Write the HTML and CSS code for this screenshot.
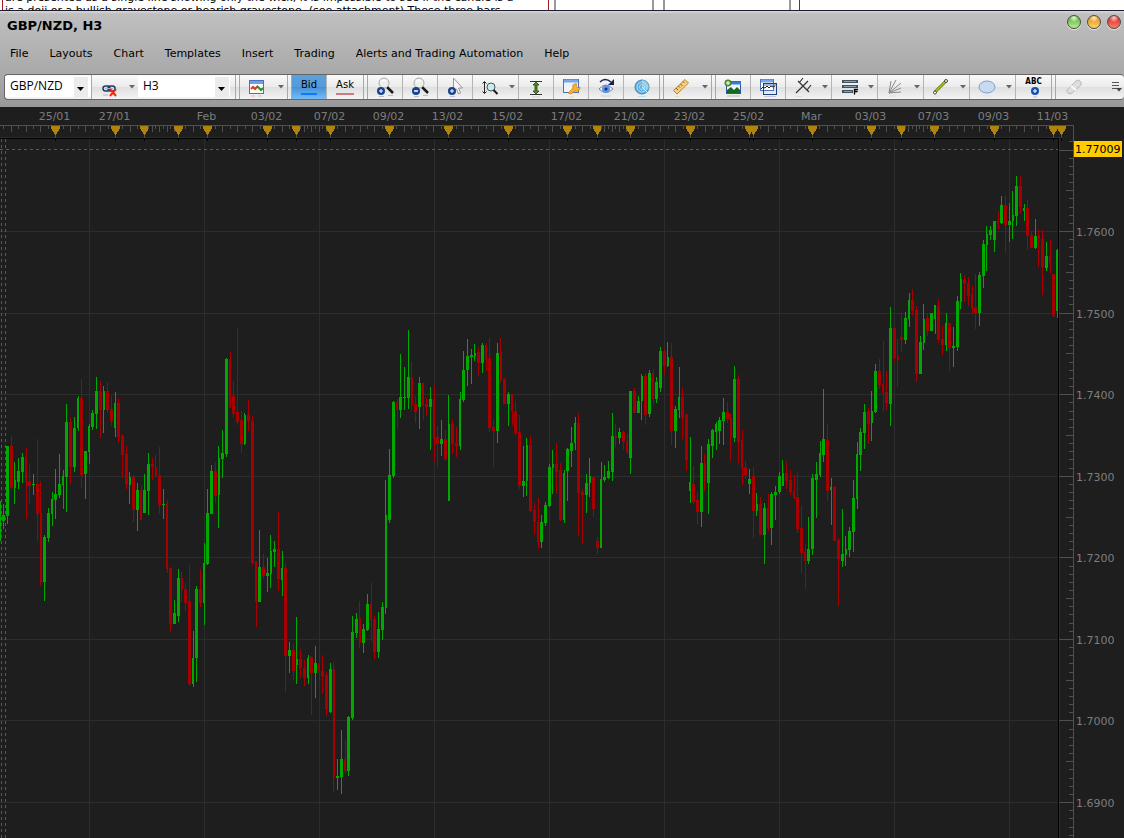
FILE: index.html
```html
<!DOCTYPE html>
<html lang="en">
<head>
  <meta charset="UTF-8">
  <meta name="viewport" content="width=device-width, initial-scale=1.0">
  <title>GBP/NZD, H3</title>
  <link rel="stylesheet" href="styles.css">
</head>
<body>
  <div class="backdrop">
    <div class="note"><p>are presented as a single line showing only the wick, it is impossible to see if the candle is a<br>is a doji or a bullish gravestone or bearish gravestone. (see attachment) These three bars</p></div>
    <div class="cell cell-a"></div>
    <div class="cell cell-b"></div>
    <div class="cell cell-c"></div>
    <div class="cell cell-d"></div>
  </div>

  <header class="window-head">
    <div class="title-bar">
      <h1>GBP/NZD, H3</h1>
      <div class="window-buttons">
        <button class="orb green" aria-label="Minimize"></button>
        <button class="orb amber" aria-label="Maximize"></button>
        <button class="orb red" aria-label="Close"></button>
      </div>
    </div>

    <nav class="menu">
      <a href="#">File</a>
      <a href="#">Layouts</a>
      <a href="#">Chart</a>
      <a href="#">Templates</a>
      <a href="#">Insert</a>
      <a href="#">Trading</a>
      <a href="#">Alerts and Trading Automation</a>
      <a href="#">Help</a>
    </nav>

    <div class="toolbar">
      <div class="group">
        <div class="combo pair">
          <select aria-label="Instrument"><option>GBP/NZD</option></select>
          <svg class="combo-arrow" width="14" height="20"><path d="M3 10h7l-3.500 4z"/></svg>
        </div>
        <button class="tool drop plain" aria-label="Link chart">
          <svg width="20" height="22"><g fill="none" stroke="#1d3c66" stroke-width="1.5"><rect x="4" y="10" width="7" height="5" rx="2.5"/><rect x="9" y="10" width="7" height="5" rx="2.5"/></g><path d="M6 12.5h8" stroke="#9db7d8"/><path d="M11 13l6 7M17 13l-6 7" stroke="#f02a10" stroke-width="2"/><path d="M4 19h5" stroke="#bbb"/></svg>
          <svg class="caret" width="6" height="4"><path d="M0 0h6l-3 3.5z"/></svg>
        </button>
        <div class="combo period">
          <select aria-label="Period"><option>H3</option></select>
          <svg class="combo-arrow" width="14" height="20"><path d="M3 10h7l-3.5 4z"/></svg>
        </div>
      </div>

      <div class="group">
        <button class="tool drop wide" aria-label="Chart type">
          <svg width="20" height="22"><rect x="2.5" y="4.500" width="14" height="13" fill="#fff" stroke="#4b70b5"/><path d="M3 6.5h13" stroke="#6f9be8" stroke-width="3"/><path d="M4 13l2-2 2 2 3-3" fill="none" stroke="#e03a1a" stroke-width="2"/><path d="M10 10l4 4 2-2" fill="none" stroke="#2d8a2d" stroke-width="2"/><path d="M4 20h4" stroke="#efb4a8"/><path d="M11 20h4" stroke="#b5d7b5"/></svg>
          <svg class="caret" width="6" height="4"><path d="M0 0h6l-3 3.5z"/></svg>
        </button>
      </div>

      <div class="group">
        <button class="tool side bid"><span>Bid</span></button>
        <button class="tool side ask"><span>Ask</span></button>
      </div>

      <div class="group">
        <button class="tool" aria-label="Zoom in">
          <svg width="20" height="22"><use href="#lens"/><path d="M4 15h4M6 13v4" stroke="#fff"/></svg>
        </button>
        <button class="tool" aria-label="Zoom out">
          <svg width="20" height="22"><use href="#lens"/><path d="M4 15h4" stroke="#fff" stroke-width="1.5"/></svg>
        </button>
        <button class="tool" aria-label="Pointer zoom">
          <svg width="20" height="22"><path d="M8.500 2v13l3-2 2 5 2-1-2-5h4z" fill="#f6f6f6" stroke="#999"/><circle cx="7" cy="15" r="4" fill="#174391"/><path d="M5 15h4M7 13v4" stroke="#fff"/><path d="M5 20.500h5" stroke="#b9c5dd"/></svg>
        </button>
        <button class="tool drop" aria-label="Vertical zoom">
          <svg width="20" height="22"><path d="M4.500 6v11M2.500 7.500l2-2 2 2M2.500 15.500l2 2 2-2" fill="none" stroke="#222"/><circle cx="11" cy="11" r="4" fill="#c4edf5" stroke="#555"/><path d="M13.500 14l4 4" stroke="#1b1b1b" stroke-width="2"/></svg>
          <svg class="caret" width="6" height="4"><path d="M0 0h6l-3 3.5z"/></svg>
        </button>
        <button class="tool" aria-label="Fit height">
          <svg width="20" height="22"><path d="M4 5.500h12M4 18.500h12" stroke="#333"/><path d="M10 6l3 3h-2v6h2l-3 3-3-3h2V9H7z" fill="#49911f" stroke="#25420e" stroke-width=".8"/><path d="M6 21h8" stroke="#cfcfcf"/></svg>
        </button>
        <button class="tool" aria-label="Chart settings">
          <svg width="20" height="22"><rect x="2.500" y="3.500" width="15" height="13" fill="#edf3fc" stroke="#4d73b8"/><path d="M3 5h14" stroke="#7ba6ec" stroke-width="3"/><path d="M7 17l5-5c-1-3 1-5 4-4l-1 2 2 2 2-1c0 3-2 5-5 4l-4 3z" fill="#f9b030" stroke="#c97a12" stroke-width=".7"/><path d="M8 21h5" stroke="#f3d7a0"/></svg>
        </button>
        <button class="tool" aria-label="Show hidden">
          <svg width="20" height="22"><path d="M3 13q7-8 14 0-7 7-14 0z" fill="#f4f8ff" stroke="#77839a"/><circle cx="10" cy="13" r="4" fill="#5f95ec"/><circle cx="10" cy="13" r="1.500" fill="#16306f"/><path d="M4 6q5-5 11 0" fill="none" stroke="#182253" stroke-width="1.500"/><path d="M18 3v6h-6z" fill="#182253"/><path d="M5 20h10" stroke="#c9cfe0"/></svg>
        </button>
        <button class="tool" aria-label="Radar">
          <svg width="20" height="22"><circle cx="10" cy="11" r="7" fill="#5eafdd" stroke="#3f86b3"/><path d="M10 11V4a7 7 0 0 1 6 10z" fill="#8cc9ea"/><g fill="none" stroke="#c6e4f5" stroke-width=".8"><circle cx="10" cy="11" r="5"/><circle cx="10" cy="11" r="2.500"/></g><path d="M10 11l5 5" stroke="#e9f6fd"/><path d="M6 20.500h8" stroke="#c5dcea"/></svg>
        </button>
      </div>

      <div class="group">
        <button class="tool drop wide" aria-label="Measure">
          <svg width="20" height="22"><path d="M2.500 14.500L14 3.500l3.500 3.500L6 18z" fill="#f7ce7a" stroke="#b8873a"/><path d="M5 12l2 2M7.500 10l1.500 1.500M9.500 8l2 2M12 5.500l1.500 1.500" stroke="#8a5c1c"/><path d="M4 20.500h4" stroke="#ecdcbc"/></svg>
          <svg class="caret" width="6" height="4"><path d="M0 0h6l-3 3.5z"/></svg>
        </button>
      </div>

      <div class="group">
        <button class="tool" aria-label="Add picture">
          <svg width="20" height="22"><rect x="3.500" y="5.500" width="14" height="12" fill="#eef5ff" stroke="#2c57a0"/><path d="M3 7h15" stroke="#3e78d6" stroke-width="3"/><path d="M4 17v-3l4-3 3 3 3-3 3 3v3z" fill="#146a1c"/><circle cx="5" cy="7" r="3.200" fill="#5d9b38" stroke="#345f1b" stroke-width=".6"/><path d="M3 7h4M5 5v4" stroke="#fff"/><path d="M4 20h13" stroke="#a9c8ac"/></svg>
        </button>
        <button class="tool" aria-label="Add indicator">
          <svg width="20" height="22"><rect x="2.500" y="3.500" width="13" height="11" fill="#fff" stroke="#4d73b8"/><path d="M3 5h12" stroke="#7ba6ec" stroke-width="3"/><rect x="5.500" y="7.500" width="13" height="11" fill="none" stroke="#1d3f86"/><path d="M6 9h12" stroke="#4d73b8"/><path d="M3 13l2-2 2 1 2-2 2 2 2-2 2 1 2-1" fill="none" stroke="#222"/><path d="M6 20.500h12" stroke="#c3ccde"/></svg>
        </button>
        <button class="tool drop fork" aria-label="Pitchfork">
          <svg width="20" height="22"><path d="M5 5l11 11M6 7l4-5M3 17L15 5M14 14l4-5" fill="none" stroke="#333" stroke-width="1.200"/><path d="M3 20.500h6" stroke="#ddd"/></svg>
          <svg class="caret" width="6" height="4"><path d="M0 0h6l-3 3.5z"/></svg>
        </button>
        <button class="tool drop" aria-label="Fibonacci">
          <svg width="20" height="22"><path d="M3 5.500h16M3 10.500h16M3 15.500h11" stroke="#41525f" stroke-width="3"/><path d="M5 5.500h12M5 10.500h12M5 15.500h8" stroke="#8fa0ab"/><path d="M15.500 18.500v-5h3.500M15.500 15.500h3" fill="none" stroke="#000" stroke-width="1.300"/></svg>
          <svg class="caret" width="6" height="4"><path d="M0 0h6l-3 3.5z"/></svg>
        </button>
        <button class="tool drop" aria-label="Fan">
          <svg width="20" height="22"><path d="M4 17L6 5M4 17L11 4M4 17L16 7M4 17l12-5M4 17l12-1" stroke="#888"/><path d="M4 20h7" stroke="#ddd"/></svg>
          <svg class="caret" width="6" height="4"><path d="M0 0h6l-3 3.5z"/></svg>
        </button>
        <button class="tool drop" aria-label="Line">
          <svg width="20" height="22"><path d="M4 16L15 5" stroke="#5b7010" stroke-width="3"/><path d="M4 16L15 5" stroke="#a8cf1c" stroke-width="1.400"/><g fill="#fff" stroke="#444"><circle cx="4" cy="16.500" r="1.500"/><circle cx="15" cy="5" r="1.500"/></g><path d="M3 20h6" stroke="#dde2cc"/></svg>
          <svg class="caret" width="6" height="4"><path d="M0 0h6l-3 3.5z"/></svg>
        </button>
        <button class="tool drop" aria-label="Ellipse">
          <svg width="20" height="22"><ellipse cx="10" cy="11" rx="8" ry="6" fill="#c6dbf1" stroke="#7ea0c6"/><path d="M5 20h9" stroke="#dbe3ec"/></svg>
          <svg class="caret" width="6" height="4"><path d="M0 0h6l-3 3.5z"/></svg>
        </button>
        <button class="tool label" aria-label="Add text">
          <span>ABC</span>
          <svg width="16" height="12"><circle cx="9" cy="5" r="4" fill="#174fae"/><path d="M7 5h4M9 3v4" stroke="#fff"/><path d="M7 11h4" stroke="#b5c5e2"/></svg>
        </button>
      </div>

      <div class="group last">
        <button class="tool plain" aria-label="Erase">
          <svg width="20" height="22"><path d="M3 14L12 5q2-2 4 0t1 4l-9 8q-2 2-4 0t-1-3z" fill="#dedede" stroke="#b9b9b9"/><path d="M7 10l5 4" stroke="#fafafa" stroke-width="2"/></svg>
        </button>
        <button class="overflow" aria-label="More tools">
          <svg width="10" height="12"><path d="M0 1.500h7M0 4.500h7M0 7.500h5" stroke="#555"/><path d="M4 7h6l-3 3.500z" fill="#444"/></svg>
        </button>
      </div>
    </div>
  </header>

  <main>
    <svg id="chart" class="chart" viewBox="0 107 1124 731" role="img" aria-label="GBP/NZD three hour candles"></svg>
  </main>

  <svg class="defs" width="0" height="0">
    <defs>
      <g id="lens">
        <path d="M12 11l6 6" stroke="#1a1a1a" stroke-width="2.500"/>
        <circle cx="9" cy="7" r="5" fill="#eee" stroke="#aaa"/>
        <path d="M6 6q2-3 5-1" fill="none" stroke="#fff" stroke-width="1.500"/>
        <circle cx="6" cy="15" r="4" fill="#174391"/>
        <path d="M4 20.500h5M13 19.500h5" stroke="#b6bfd0"/>
      </g>
    </defs>
  </svg>

  <script src="chart.js"></script>
</body>
</html>
```
FILE: styles.css
```css
* {
  box-sizing: border-box;
}
body {
  margin: 0;
  min-height: 100vh;
  background: #1e1e1e;
  font-family: "DejaVu Sans", Verdana, sans-serif;
  font-size: 11px;
  color: #000;
}
button {
  margin: 0;
  padding: 0;
  border: none;
  background: none;
  font-family: inherit;
  cursor: pointer;
}

/* document behind the chart window */
.backdrop {
  display: flex;
  height: 10px;
  overflow: hidden;
  background: #fff;
}
.note {
  width: 547px;
  margin-left: 2px;
  border-left: 1px solid #a01c24;
  border-right: 1px solid #a01c24;
}
.note p {
  margin: -9px 0 0 2px;
  line-height: 13px;
  white-space: nowrap;
}
.cell {
  border-right: 2px solid #999;
}
.cell-a {
  width: 7px;
}
.cell-b {
  width: 98px;
}
.cell-c {
  width: 11px;
}
.cell-d {
  width: 135px;
  border-right: 1px solid #a01c24;
  box-shadow: inset -8px 0 #fff, inset -10px 0 #999;
}

.window-head {
  height: 97px;
  border-top: 1px solid #1c1c30;
  background: linear-gradient(#d8d8d8, #bfbfbf 3px, #a6a6a6 70px, #999);
}
.title-bar {
  display: flex;
  justify-content: space-between;
  height: 29px;
  padding: 4px 3px 0 7px;
}
h1 {
  margin: 0;
  font-size: 13px;
  line-height: 22px;
}
.window-buttons {
  display: flex;
  gap: 6px;
}
.orb {
  width: 14px;
  height: 14px;
  border: 1px solid #4b4b3c;
  border-radius: 50%;
  box-shadow: 0 1px 1px #e6e6e6;
}
.green {
  background: radial-gradient(circle at 50% 15%, #e2ffd4, transparent 40%), linear-gradient(#57a040, #b2f48a);
}
.amber {
  background: radial-gradient(circle at 50% 15%, #fff0c0, transparent 40%), linear-gradient(#d8871c, #ffd660);
}
.red {
  background: radial-gradient(circle at 50% 15%, #ffd0d0, transparent 40%), linear-gradient(#c82a2a, #ff7a68);
}
.menu {
  display: flex;
  gap: 21px;
  height: 34px;
  padding-left: 10px;
}
.menu a {
  color: #000;
  line-height: 28px;
  text-decoration: none;
}

.toolbar {
  display: flex;
  gap: 3px;
  height: 26px;
  margin-left: 4px;
  border: 1px solid #666;
  border-right: none;
  border-radius: 4px;
  background: linear-gradient(#fafafa, #ebebeb 50%, #dfdfdf 51%, #f3f3f3);
}
.group {
  display: flex;
  flex: none;
  border-right: 1px solid #a8a8a8;
}
.group + .group {
  border-left: 1px solid #a8a8a8;
}
.last {
  flex: 1;
  justify-content: space-between;
  border-right: none;
}
.combo {
  position: relative;
  padding: 1px 0;
}
.combo select {
  width: 100%;
  height: 21px;
  padding: 0 0 3px 5px;
  border: none;
  background: #fff;
  appearance: none;
  font-family: "Open Sans", "Noto Sans", sans-serif;
  font-size: 12px;
}
.pair {
  width: 87px;
  border-right: 1px solid #a8a8a8;
}
.period {
  width: 97px;
  padding-right: 5px;
}
.combo-arrow {
  position: absolute;
  top: 2px;
  right: 3px;
  background: #ececec;
  pointer-events: none;
}
.period .combo-arrow {
  right: 6px;
}
.tool {
  display: flex;
  align-items: center;
  justify-content: center;
  width: 35px;
  border-right: 1px solid #b4b4b4;
}
.drop {
  justify-content: space-between;
  width: 46px;
  padding: 0 3px 0 7px;
}
.wide {
  width: 47px;
}
.plain,
.tool:last-child {
  border-right: none;
}
.caret {
  fill: #666;
}
.side {
  font-size: 10px;
}
.side span {
  padding: 0 0 3px;
  border-bottom: 2px solid #c87c86;
  line-height: 11px;
}
.side.bid {
  background: linear-gradient(#5b9fdb, #5599d8 50%, #4690d8 51%, #74bdf8);
}
.side.ask {
  width: 36px;
}
.bid span {
  border-color: #087aff;
}
.label {
  flex-direction: column;
}
.label span {
  font: bold 8px/9px "DejaVu Sans Condensed", sans-serif;
}
.overflow {
  padding: 2px 2px 0 0;
}

main {
  background: #1e1e1e;
}
.chart {
  display: block;
  width: 100%;
  shape-rendering: crispEdges;
}
.chart text {
  fill: #7d7d7d;
  font-size: 11px;
}
.chart .date {
  text-anchor: middle;
}
.chart .quote {
  fill: #000;
}
.grid {
  fill: #2d2d2d;
}
.axis {
  fill: #505050;
}
.frame {
  fill: #000;
}
.marker {
  fill: #b0830c;
}
.quote-box {
  fill: #ffcc00;
}
.dashes {
  stroke: #5a5a5a;
  stroke-dasharray: 3 3;
}
.up {
  fill: #00a800;
}
.down {
  fill: #a80000;
}
.defs {
  position: absolute;
}
```
FILE: chart.js
```js
// one candle per entry: direction, high, body top, body bottom, low
const candles = `
u 501 501 541 541,u 504 515 521 529,u 446 446 516 524,d 436 446 488 489,u 462 480 488 504,u 458 471 482 489,u 453 457 472 483,
d 448 457 482 519,d 464 481 486 504,u 474 484 485 495,d 439 484 514 541,d 481 513 582 586,u 535 537 582 601,u 508 513 538 542,
u 492 499 514 526,u 469 494 500 519,u 454 484 495 498,u 470 476 485 509,u 404 422 477 512,d 418 422 467 484,u 417 428 467 472,
u 396 398 428 431,d 379 398 475 488,u 451 451 474 499,u 424 426 452 464,u 410 413 427 430,u 377 391 414 429,d 381 391 410 438,
u 386 391 410 433,d 382 391 410 413,d 396 409 421 426,u 392 403 428 437,d 398 403 437 443,d 434 436 455 478,d 446 454 484 489,
u 472 477 485 504,d 475 477 510 522,u 483 490 510 531,d 485 490 520 520,u 474 490 513 513,u 453 464 491 515,d 458 464 467 480,
d 455 467 476 477,d 447 475 505 514,u 489 504 505 519,d 500 504 569 573,d 567 568 624 632,u 600 613 624 624,u 569 578 616 622,
d 572 578 590 602,d 583 589 603 611,d 565 601 684 686,u 631 658 684 687,u 586 589 658 682,d 569 589 603 607,u 543 563 603 625,
u 489 513 564 565,u 465 471 514 514,d 462 471 496 503,u 446 458 495 528,u 430 453 459 478,u 358 359 454 457,d 352 359 407 408,
d 381 396 414 417,d 328 412 422 425,d 411 420 444 453,u 413 415 444 445,d 400 415 421 431,d 416 421 563 565,d 561 561 602 627,
u 530 567 602 602,d 554 567 576 579,u 558 573 576 592,u 535 551 574 588,u 541 549 552 567,d 512 549 579 591,u 551 568 580 596,
d 563 568 656 692,u 642 650 656 673,d 644 650 671 681,u 617 659 665 684,d 649 659 668 678,d 660 668 678 686,u 655 658 678 684,
d 656 657 673 715,u 646 663 673 698,d 646 664 671 683,d 655 671 676 694,d 672 675 709 716,u 663 669 712 713,d 662 669 778 792,
u 759 776 778 790,u 730 759 777 794,d 740 759 771 773,u 716 717 771 776,u 616 632 718 720,u 613 619 633 638,d 601 618 643 648,
u 624 629 643 653,u 594 604 630 631,d 583 604 620 641,d 616 619 652 659,u 612 629 652 658,u 602 607 630 640,u 480 515 608 614,
u 449 475 520 523,u 401 402 476 478,d 399 402 410 429,u 354 397 410 418,u 367 397 398 410,u 330 377 398 409,d 362 378 405 410,
d 396 404 412 423,u 377 383 407 429,d 383 383 405 420,d 398 404 407 416,u 387 399 407 450,d 385 399 438 462,d 426 437 444 467,
u 420 439 444 456,d 430 439 459 461,u 395 424 501 501,d 420 424 444 454,d 427 443 446 457,u 392 399 446 450,u 351 370 400 402,
u 339 356 370 386,u 349 355 357 384,u 344 353 356 361,d 347 352 363 376,u 343 345 363 373,d 343 345 359 371,d 338 358 428 432,
d 420 427 431 467,u 343 353 431 443,d 338 352 380 382,d 378 379 404 404,u 392 394 404 426,d 394 394 411 425,d 401 411 433 435,
d 415 432 486 489,u 446 481 486 497,u 438 445 481 496,d 436 445 511 512,d 503 510 522 535,d 498 522 542 549,u 515 522 542 548,
u 502 505 523 526,u 464 467 506 507,u 450 464 468 494,d 443 464 472 494,d 463 470 520 521,u 470 473 520 523,u 448 449 471 501,
u 427 443 451 467,u 417 423 443 450,d 413 423 493 536,d 489 492 495 544,u 474 483 495 513,u 458 476 483 497,d 477 477 509 517,
d 537 541 548 554,u 462 479 548 548,u 465 477 480 482,u 461 471 478 479,u 413 436 472 481,d 424 436 438 447,u 428 432 438 444,
d 431 432 442 450,d 434 441 452 454,u 391 391 458 474,d 388 391 413 413,u 396 401 413 413,u 374 376 401 420,d 373 376 415 425,
u 370 373 414 417,d 369 373 399 404,u 377 382 399 403,u 347 351 388 392,d 350 351 366 376,u 342 357 366 367,d 343 357 431 445,
u 406 409 431 448,u 367 397 410 418,d 388 397 418 439,d 413 415 460 471,u 437 482 491 503,d 466 484 502 504,d 492 500 512 524,
u 446 463 512 527,d 454 463 481 491,u 439 444 483 514,u 429 430 446 458,u 422 424 432 450,u 417 420 431 444,u 398 412 421 445,
d 402 412 419 423,d 414 418 437 461,u 366 379 438 442,d 375 379 442 463,d 430 440 468 485,d 461 467 475 479,u 469 479 484 494,
d 467 476 511 538,u 493 504 511 516,d 497 504 535 535,u 503 508 535 564,d 494 508 528 531,u 492 494 528 545,u 486 492 495 520,
u 472 476 492 494,u 460 473 486 486,d 461 473 481 489,d 470 480 492 495,d 475 491 498 499,d 472 497 529 533,d 506 528 553 573,
d 544 552 561 589,u 517 549 561 564,u 474 478 549 555,u 462 474 480 518,u 441 453 475 477,u 389 439 455 462,d 424 440 491 501,
u 478 487 490 525,d 486 487 541 541,d 538 540 559 606,u 509 554 561 567,u 536 549 555 566,u 527 531 550 557,u 480 498 532 552,
u 442 454 499 509,u 428 432 455 471,u 404 412 433 449,d 408 411 424 444,u 391 411 423 441,u 364 371 412 413,d 359 371 385 389,
d 341 384 393 412,d 371 392 403 410,u 307 328 404 426,d 327 328 358 362,d 339 356 360 387,d 313 337 340 352,u 312 318 340 344,
u 293 300 319 327,d 289 300 311 316,d 306 310 374 382,u 336 342 374 374,u 304 319 343 350,d 314 318 331 336,u 313 313 331 331,
u 305 305 319 334,d 299 306 340 343,d 326 339 345 355,u 313 323 345 351,d 323 323 348 371,u 327 346 348 367,u 296 301 347 351,
u 273 279 302 309,d 275 280 284 302,d 277 283 296 306,d 286 294 308 313,d 274 307 313 329,u 272 275 313 326,u 240 244 276 288,
u 226 234 245 271,u 226 230 235 240,u 221 221 240 252,d 211 221 223 229,u 196 205 223 224,d 195 205 225 253,u 203 221 225 242,
u 191 215 221 239,u 176 186 216 226,d 176 186 207 214,u 204 208 211 221,d 200 208 236 250,d 232 235 248 248,u 219 236 248 249,
d 230 235 239 267,d 230 239 267 295,u 242 256 268 271,d 240 256 263 273,d 274 274 316 317,u 249 250 311 318`.trim().split(",");

const dates = [
  [55, "25/01"], [115, "27/01"], [144], [178], [207, "Feb"], [267, "03/02"], [296], [330, "07/02"],
  [389, "09/02"], [448, "13/02"], [508, "15/02"], [567, "17/02"], [597], [630, "21/02"], [690, "23/02"],
  [749, "25/02"], [753], [812, "Mar"], [871, "03/03"], [901], [934, "07/03"], [994, "09/03"], [1053, "11/03"], [1061]
];

const chart = document.getElementById("chart");
const parts = [];

function rect(cls, x, y, w, h) {
  parts.push(`<rect class="${cls}" x="${x}" y="${y}" width="${w}" height="${h}"/>`);
}

// grid
for (let x = 89; x < 1058; x += 115) rect("grid", x, 139, 1, 699);
for (let i = 1; i < 9; i++) rect("grid", 0, Math.floor(150 + i * 81.57), 1057, 1);
parts.push('<path class="dashes" d="M1.5 139V838M5.5 139V838M0 149.5H1058"/>');

// candles
const step = 3.71;
candles.forEach((row, i) => {
  const [dir, high, top, bottom, low] = row.trim().split(" ");
  const cls = dir === "u" ? "up" : "down";
  const wick = Math.floor(0.09 + step * i);
  const left = Math.floor(step * i - 0.79);
  const next = Math.floor(step * (i + 1) - 0.79);
  rect(cls, wick, high, 1, Math.max(low - high, 1));
  rect(cls, left, top, Math.min(next - left - 1, 1058 - left), Math.max(bottom - top, 1));
});

// frame between the plot and the scales
rect("grid", 0, 137, 1060, 1);
rect("grid", 1059, 137, 1, 701);
rect("frame", 0, 138, 1059, 1);
rect("frame", 1058, 138, 1, 700);

// time scale
rect("axis", 0, 125, 1074, 1);
let from = -4;
dates.forEach(([x, name]) => {
  const weekend = [178, 330, 630, 934].includes(x);
  const count = weekend ? 9 : Math.round((x - from) / 7.45);
  for (let k = 1; k < count; k++) {
    rect("axis", Math.round(from + (x - from) * k / count), 126, 1, k % 2 ? 3 : 6);
  }
  from = x;
  rect("axis", x, 134, 1, 4);
  rect("frame", x, 138, 1, 3);
  parts.push(`<path class="marker" d="M${x - 4} 126h9v2l-4 7h-1l-4-7z"/>`);
  if (name) parts.push(`<text class="date" x="${x - 0.5}" y="120">${name}</text>`);
});

// price scale
rect("axis", 1073, 125, 1, 713);
for (let k = -1; k < 85; k++) {
  const length = k % 10 === 0 ? 14 : k % 5 === 0 ? 7 : 4;
  rect("axis", 1073 - length, Math.floor(150 + k * 8.157), length, 1);
}
for (let i = 1; i < 9; i++) {
  const y = Math.floor(150 + i * 81.57);
  parts.push(`<text x="1076" y="${y + 5}">${(1.77 - i / 100).toFixed(4)}</text>`);
}
rect("quote-box", 1074, 141, 48, 16);
parts.push('<text class="quote" x="1075" y="153">1.77009</text>');

chart.innerHTML = parts.join("");
```
